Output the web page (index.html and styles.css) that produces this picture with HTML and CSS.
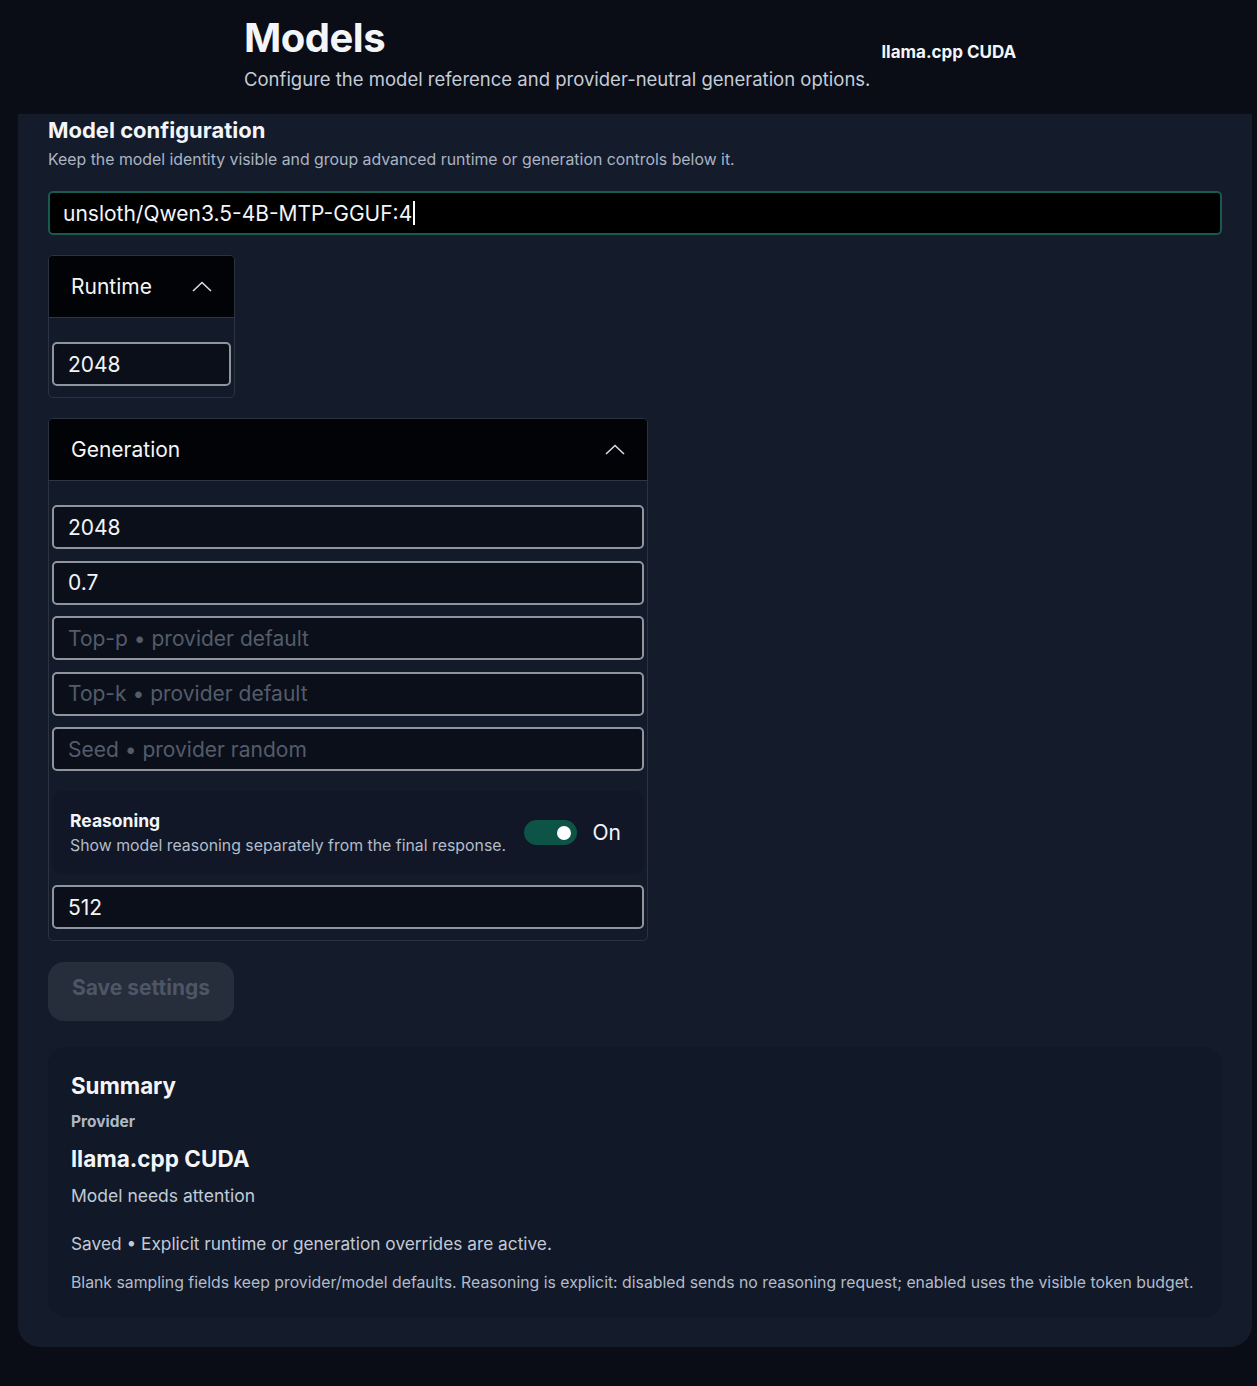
FILE: index.html
```html
<!DOCTYPE html>
<html lang="en">
<head>
    <meta charset="UTF-8">
    <meta name="viewport" content="width=device-width, initial-scale=1.0">
    <title>Models</title>
    <link rel="stylesheet" href="styles.css">
</head>
<body>
    <header class="page-header">
        <div class="page-title">
            <h1>Models</h1>
            <p>Configure the model reference and provider-neutral generation options.</p>
        </div>
        <span class="provider-tag">llama.cpp CUDA</span>
    </header>

    <main class="panel">
        <h2 class="section-title">Model configuration</h2>
        <p class="section-desc">Keep the model identity visible and group advanced runtime or generation controls below it.</p>

        <div class="model-field">unsloth/Qwen3.5-4B-MTP-GGUF:4<span class="caret"></span></div>

        <section class="group group-runtime">
            <div class="group-head">
                <span>Runtime</span>
                <svg class="chevron" width="20" height="11" viewBox="0 0 20 11"><polyline points="1,10 10,1.5 19,10" fill="none" stroke="#d6dbe3" stroke-width="1.6"/></svg>
            </div>
            <div class="group-body">
                <input class="field" type="text" value="2048">
            </div>
        </section>

        <section class="group group-generation">
            <div class="group-head">
                <span>Generation</span>
                <svg class="chevron" width="20" height="11" viewBox="0 0 20 11"><polyline points="1,10 10,1.5 19,10" fill="none" stroke="#d6dbe3" stroke-width="1.6"/></svg>
            </div>
            <div class="group-body">
                <input class="field" type="text" value="2048">
                <input class="field" type="text" value="0.7">
                <input class="field" type="text" placeholder="Top-p • provider default">
                <input class="field" type="text" placeholder="Top-k • provider default">
                <input class="field" type="text" placeholder="Seed • provider random">

                <div class="reasoning">
                    <div class="reasoning-text">
                        <strong>Reasoning</strong>
                        <span>Show model reasoning separately from the final response.</span>
                    </div>
                    <div class="switch-wrap">
                        <span class="switch"><span class="knob"></span></span>
                        <span class="switch-label">On</span>
                    </div>
                </div>

                <input class="field" type="text" value="512">
            </div>
        </section>

        <button class="save-btn" disabled>Save settings</button>

        <section class="summary">
            <h3>Summary</h3>
            <div class="summary-label">Provider</div>
            <div class="summary-value">llama.cpp CUDA</div>
            <div class="summary-status">Model needs attention</div>
            <div class="summary-saved">Saved • Explicit runtime or generation overrides are active.</div>
            <div class="summary-note">Blank sampling fields keep provider/model defaults. Reasoning is explicit: disabled sends no reasoning request; enabled uses the visible token budget.</div>
        </section>
    </main>
</body>
</html>
```

FILE: styles.css
```css
body {
    margin: 0;
    background: #0a0d16;
    color: #f3f5f8;
    font-family: Inter, "Noto Sans", sans-serif;
}

.page-header {
    height: 114px;
    display: flex;
    align-items: flex-start;
    gap: 11px;
    padding: 16px 0 0 244px;
    box-sizing: border-box;
}
.page-title h1 {
    margin: 0;
    font-size: 40px;
    line-height: 44px;
    font-weight: 700;
    letter-spacing: -0.5px;
}
.page-title p {
    margin: 7px 0 0;
    font-size: 18.5px;
    line-height: 24px;
    color: #c4ccd8;
}
.provider-tag {
    margin-top: 25px;
    font-size: 17px;
    line-height: 22px;
    font-weight: 700;
}

.panel {
    margin: 0 5px 38px 18px;
    background: #141b2b;
    border-radius: 0 0 22px 22px;
    padding: 2px 30px 30px;
}

.section-title {
    margin: 0;
    font-size: 22px;
    line-height: 28px;
    font-weight: 700;
}
.section-desc {
    margin: 6px 0 0;
    font-size: 15.85px;
    line-height: 20px;
    color: #aab4c3;
}

.model-field {
    margin-top: 21px;
    height: 44px;
    box-sizing: border-box;
    border: 2px solid #185a50;
    border-radius: 5px;
    background: #000;
    padding: 0 13px;
    display: flex;
    align-items: center;
    font-size: 21px;
}
.caret {
    width: 1.5px;
    height: 24px;
    background: #fff;
    margin-left: 1px;
}

.group {
    margin-top: 20px;
    border: 1px solid #2b3341;
    border-radius: 5px;
    background: #131a29;
    overflow: hidden;
}
.group-runtime {
    width: 185px;
}
.group-generation {
    width: 598px;
}
.group-head {
    height: 62px;
    box-sizing: border-box;
    background: #020307;
    border-bottom: 1px solid #2f3745;
    display: flex;
    align-items: center;
    justify-content: space-between;
    padding: 0 22px;
    font-size: 21px;
}
.group-body {
    padding: 24px 3px 11px;
    display: flex;
    flex-direction: column;
    gap: 11.5px;
}

.field {
    height: 44px;
    box-sizing: border-box;
    border: 2px solid #8e959f;
    border-radius: 5px;
    background: #0b0f1a;
    color: #f3f5f8;
    font-family: inherit;
    font-size: 21px;
    padding: 0 14px;
    outline: none;
}
.field::placeholder {
    color: #535c6b;
}

.reasoning {
    margin-top: 8px;
    background: #111726;
    border-radius: 10px;
    padding: 19px 23px 18px 18px;
    display: flex;
    align-items: center;
    justify-content: space-between;
}
.reasoning-text {
    display: flex;
    flex-direction: column;
    gap: 4px;
}
.reasoning-text strong {
    font-size: 17.5px;
    line-height: 22px;
}
.reasoning-text span {
    font-size: 15.85px;
    line-height: 20px;
    color: #b3bcca;
}
.switch-wrap {
    display: flex;
    align-items: center;
    gap: 16px;
}
.switch {
    width: 53px;
    height: 25px;
    border-radius: 13px;
    background: #0d5447;
    display: flex;
    align-items: center;
    justify-content: flex-end;
    padding-right: 6px;
    box-sizing: border-box;
}
.knob {
    width: 14px;
    height: 14px;
    border-radius: 50%;
    background: #fff;
}
.switch-label {
    font-size: 21px;
}

.save-btn {
    display: block;
    margin-top: 21px;
    width: 186px;
    height: 59px;
    padding: 0 0 8px;
    border: none;
    border-radius: 16px;
    background: #262d3b;
    color: #4e5666;
    font-family: inherit;
    font-size: 21px;
    font-weight: 700;
}

.summary {
    margin-top: 26px;
    background: #111827;
    border-radius: 18px;
    padding: 25px 20px 24px 23px;
}
.summary h3 {
    margin: 0;
    font-size: 22.3px;
    line-height: 28px;
    font-weight: 700;
}
.summary-label {
    margin-top: 12px;
    font-size: 15.5px;
    line-height: 20px;
    font-weight: 700;
    color: #aeb8c6;
}
.summary-value {
    margin-top: 13px;
    font-size: 22.5px;
    line-height: 28px;
    font-weight: 700;
}
.summary-status {
    margin-top: 12px;
    font-size: 17.5px;
    line-height: 22px;
    color: #c2cad6;
}
.summary-saved {
    margin-top: 26px;
    font-size: 17.3px;
    line-height: 22px;
    color: #c2cad6;
}
.summary-note {
    margin-top: 18px;
    font-size: 15.8px;
    line-height: 20px;
    color: #b3bcca;
    white-space: nowrap;
}
```
